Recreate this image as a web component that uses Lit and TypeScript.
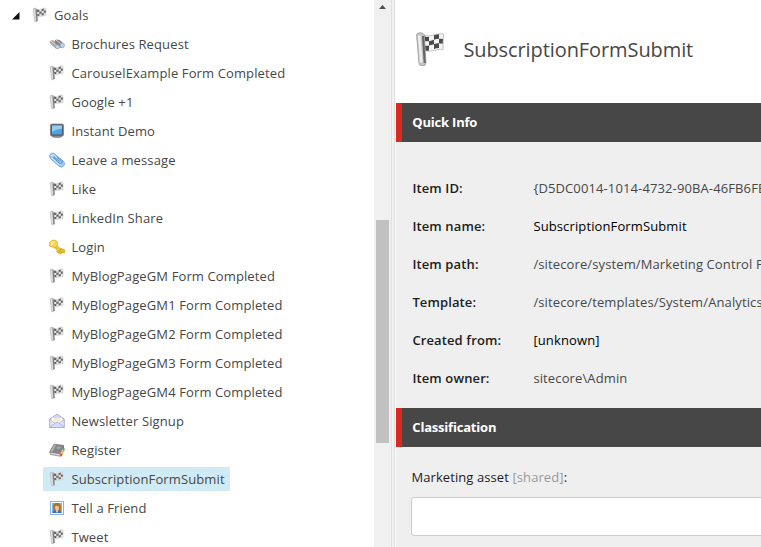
import { LitElement, html, css, svg } from "lit";
import { customElement, property } from "lit/decorators.js";

const largeFlag = svg`
  <path d="M9 2.5C15 6.5 20 .5 28.5 2L27.8 18C21 16 17 21 9.5 18.5Z" fill="#f3f3f3" stroke="#c4c4c4"/>
  <path d="M9 4q3 1.3 5 .8v4.4q-3 .4-5-.5zM19 3.2q3-1 5-1v4.6q-3 0-5 1zM14 9.2q3-.7 5-1.4v4.4l-5 1.4zM24 6.8q2-.3 4 .2l-.4 4.7q-2-.4-3.6-.1zM9 13.2q3 1 5 .4v5q-3 .3-5-.4zM19 12.2q3-1 5-.8V16q-3 .2-5 1z" fill="#4b4b4b"/>
  <path d="M1.6 3Q1.4 .8 5 .8T9.2 3L11 31Q11 33.8 7.5 33.8T4 31Z" fill="#c4c4c4" stroke="#a6a6a6"/>
  <path d="M4.2 3.5L6.2 30.5" stroke="#ededed" stroke-width="2.6" fill="none"/>
  <path d="M8 4L9.7 31" stroke="#666" stroke-width="2" fill="none"/>`;

const smallFlag = svg`
  <path d="M4.5 2Q7.5 3.4 10 1.7T14 1.5V9Q11.5 8.4 9.5 9.3T5 9.4Z" fill="#e4e4e4" stroke="#c9c9c9" stroke-width=".6"/>
  <path d="M5 2.6l2.3.3v2H5zM9.6 2.2l2.2-.7v2.1l-2.2.7zM7.3 4.9l2.3-.6v2.2l-2.3.6zM11.8 3.6l2-.1v2.2h-2zM5 7l2.3.1v2H5zM9.6 6.5l2.2-.6v2l-2.2.7z" fill="#666"/>
  <path d="M1.2 1.8Q2.8.3 4.5 1.8L5.7 13.8Q4.4 15.8 2.5 14.2Z" fill="#c4c4c4" stroke="#b4b4b4" stroke-width=".6"/>
  <path d="M2.3 2.2L3.4 13.8" stroke="#e2e2e2" stroke-width="1.1"/>
  <path d="M4.2 2.5L5 14" stroke="#7a7a7a" stroke-width="1.1"/>`;

const glyphs: Record<string, unknown> = {
  flag: smallFlag,
  binoculars: svg`
    <path d="M.5 6.5Q1 4 4 4L10 9 8 12Q5 12 .5 6.5Z" fill="#aaa9a7"/>
    <path d="M6 4Q9 2.5 12 5l3 4-3 3-6-5Z" fill="#85827f"/>
    <path d="M2 5l6 5M7 4l5 4" stroke="#d8d8d8"/>
    <ellipse cx="8.4" cy="10.7" rx="2.4" ry="1.9" fill="#badcf3" stroke="#85898c" stroke-width=".7"/>
    <ellipse cx="13.3" cy="9.3" rx="2.1" ry="2.5" fill="#b5d9f4" stroke="#8c969c" stroke-width=".7"/>`,
  monitor: svg`
    <path d="M5 12h6l2.5 1.8Q8 16.4 2.5 13.8Z" fill="#777"/>
    <rect x="1.4" y="1" width="13.2" height="12" rx="1.6" fill="#535b63" stroke="#7b8188" stroke-width=".7"/>
    <rect x="3" y="2.6" width="10" height="8.8" fill="#4ba2e4"/>
    <path d="M3 2.6h10v3.2Q7 6 3 9Z" fill="#93cdf5"/>
    <path d="M4 14.2h8" stroke="#b8b8b8" stroke-width=".8"/>`,
  clip: svg`
    <path d="M.9 2.8Q2.4.2 5 1.4L14.6 9.4Q16.4 11.6 14.7 13.8T10.4 14.5L1.5 6.7Q.2 4.5.9 2.8Z" fill="#a5cdf5" stroke="#6ea2da" stroke-width=".9"/>
    <path d="M4 5.3L10 11Q12 12.2 13 10.7T12.5 9L7.2 4.6Q5.8 4 5.2 5L10.5 9.5" fill="none" stroke="#5389c8"/>
    <path d="M2.4 4Q2.9 2.3 4.5 3L8 5.6M3 6L10 12.5" fill="none" stroke="#ddeeff" stroke-width=".9"/>`,
  key: svg`
    <path d="M6.5 5.7L13.5 11.2 12.4 14 10.8 12.8 9.8 14.3 7.7 12.6 8.4 11 5 8.3Z" fill="#efc431" stroke="#d2a01e" stroke-width=".7"/>
    <path d="M12 9.6l3.6 1.2-.1 3-2.6-.4-1.2 1.8-2-1.6Z" fill="#e8b823" stroke="#c99818" stroke-width=".6"/>
    <path d="M.7 3.6Q2.1.8 5.3 1.1T8.6 5.2 5 8.3.7 7 .7 3.6Z" fill="#fbd744" stroke="#d9ad24" stroke-width=".8"/>
    <path d="M2 3.8Q3.5 2 6 3" stroke="#fff0a0" fill="none"/><circle cx="2.9" cy="5.2" r=".9" fill="#fff"/>`,
  mail: svg`
    <path d="M.8 6L8 1l7.2 5v8.5H.8Z" fill="#d4d6f4" stroke="#a4a9dc" stroke-width=".9"/>
    <path d="M2.5 4.5h11V11h-11Z" fill="#fff8ea" stroke="#dccdb8" stroke-width=".6"/>
    <path d="M5 6h6M4.5 7.7h7" stroke="#e2d4b8" stroke-width=".7"/>
    <path d="M.8 6.5L6 10.3.8 14.5ZM15.2 6.5L10 10.3l5.2 4.2Z" fill="#e3e5fb" stroke="#a4a9dc" stroke-width=".6"/>
    <path d="M.8 14.5L6 10Q8 8.7 10 10l5.2 4.5Z" fill="#d8dcfa" stroke="#a0a5da" stroke-width=".7"/>`,
  book: svg`
    <path d="M5 2.2L14.8 3.4 11.2 11.8.7 10Z" fill="#858585" stroke="#707070" stroke-width=".7"/>
    <path d="M5.3 2.7L7 3 3.3 10.1 1.2 9.8Z" fill="#b2b2b2"/>
    <path d="M8.2 4.6l3.8.5-1 2-3.8-.6Z" fill="#a8a8a8"/>
    <path d="M.7 10l10.5 1.8v2.4L1.5 12.5Z" fill="#d6d6d6" stroke="#7c7c7c" stroke-width=".7"/>
    <path d="M14.8 3.4v3.1l-1 2.3V5.8Z" fill="#5c5c5c"/>
    <path d="M13.9 6l1.7.2v2.6l-1.7.1Z" fill="#51b346"/><path d="M12.7 8.8l2.2.1-.5 2.6-1.7.5Z" fill="#f2bd36"/><path d="M11.3 11.7l2.4-.3-.6 2.6-1.8.5Z" fill="#e14b32"/>`,
  person: svg`
    <rect x="1.5" y="1.5" width="13" height="13" fill="#f8fbff" stroke="#8fafdc"/>
    <rect x="3" y="3" width="10" height="10" fill="#82b1ee"/>
    <path d="M4.2 11V6Q4.5 3 8 3t3.8 3v5Z" fill="#b0711d"/>
    <path d="M3.5 13q.5-3 4.5-3t4.5 3Z" fill="#316fcb"/>
    <path d="M6 6.5Q8 5 10 7q.3 3.2-2 4-2.2-.8-2-4.5Z" fill="#f9c477"/>
    <path d="M6.5 10.5h3L8 13Z" fill="#f7d8a8"/>`,
};

@customElement("item-icon")
class ItemIcon extends LitElement {
  @property() name = "flag";
  static styles = css`
    :host { display: block; width: 16px; height: 16px; flex: none; }
    svg { display: block; width: 100%; height: 100%; overflow: visible; }
  `;
  render() {
    return this.name === "large-flag"
      ? html`<svg viewBox="0 0 32 35">${largeFlag}</svg>`
      : html`<svg viewBox="0 0 16 16">${glyphs[this.name]}</svg>`;
  }
}

const goals: [string, string][] = [
  ["binoculars", "Brochures Request"],
  ["flag", "CarouselExample Form Completed"],
  ["flag", "Google +1"],
  ["monitor", "Instant Demo"],
  ["clip", "Leave a message"],
  ["flag", "Like"],
  ["flag", "LinkedIn Share"],
  ["key", "Login"],
  ["flag", "MyBlogPageGM Form Completed"],
  ["flag", "MyBlogPageGM1 Form Completed"],
  ["flag", "MyBlogPageGM2 Form Completed"],
  ["flag", "MyBlogPageGM3 Form Completed"],
  ["flag", "MyBlogPageGM4 Form Completed"],
  ["mail", "Newsletter Signup"],
  ["book", "Register"],
  ["flag", "SubscriptionFormSubmit"],
  ["person", "Tell a Friend"],
  ["flag", "Tweet"],
];

const info: [string, string, boolean][] = [
  ["Item ID:", "{D5DC0014-1014-4732-90BA-46FB6FE", false],
  ["Item name:", "SubscriptionFormSubmit", true],
  ["Item path:", "/sitecore/system/Marketing Control P", false],
  ["Template:", "/sitecore/templates/System/Analytics", false],
  ["Created from:", "[unknown]", true],
  ["Item owner:", "sitecore\\Admin", false],
];

@customElement("app-root")
class AppRoot extends LitElement {
  static styles = css`
    :host {
      display: flex; width: 100%; height: 547px; overflow: hidden; background: #fff;
      font: 13px/24px "Open Sans", "Noto Sans", sans-serif; color: #474747; letter-spacing: .12px;
    }
    * { box-sizing: border-box; }
    .tree { width: 374px; flex: none; padding-top: 3px; overflow: hidden; }
    .node { display: flex; align-items: center; width: max-content; height: 24px; margin: 0 0 5px 43px; padding: 0 5px 0 6px; gap: 6.4px; white-space: nowrap; }
    .node.root { margin-left: 5px; gap: 0; }
    .node.root item-icon { margin: 0 6px 0 12px; }
    .node.selected { background: #d0ebf6; }
    .arrow { display: block; width: 9px; height: 9px; }
    .scroll { width: 17px; flex: none; background: #f0f0f0; display: flex; flex-direction: column; align-items: center; }
    .up { display: block; width: 7px; height: 4px; margin: 5px 0 211px; }
    .thumb { width: 13px; height: 223px; background: #c1c1c1; }
    .splitter { width: 5px; flex: none; background: #f2f2f2; border-left: 1px solid #e0e0e0; border-right: 1px solid #fff; box-shadow: inset -1px 0 #ddd; }
    .editor { flex: 1; min-width: 0; background: #efefef; overflow: hidden; }
    .title { height: 103px; background: #fff; display: flex; align-items: center; padding: 0 0 5px 19px; gap: 16.4px; }
    .title item-icon { width: 32px; height: 35px; }
    .title h1 { margin: 2px 0 0; font-size: 20px; line-height: 28px; font-weight: 400; letter-spacing: -.09px; }
    .bar { height: 39px; margin: 0; border-left: 6px solid #dc291e; background: #474747; color: #fff; padding-left: 10.3px; font-size: 13px; line-height: 39px; font-weight: 700; letter-spacing: -.2px; }
    .info { display: grid; grid-template-columns: 121px 1fr; grid-auto-rows: 38px; align-items: center; height: 266px; margin: 0; padding: 27px 0 0 16.4px; white-space: nowrap; }
    dt { color: #1d1d1d; font-weight: 600; }
    dd { margin: 0; }
    .dark { color: #000; }
    .field { padding: 18px 0 0 15px; }
    .label { color: #1d1d1d; display: block; height: 32px; line-height: 24px; padding-left: .4px; letter-spacing: .09px; }
    .muted { color: #999; }
    .box { width: calc(100% + 8px); height: 39px; background: #fff; border: 1px solid #ccc; border-radius: 3px; }
  `;
  render() {
    return html`
      <nav class="tree">
        <div class="node root">
          <svg class="arrow" viewBox="0 0 9 9"><path d="M8.5 1v7.5H1Z" fill="#111"/></svg>
          <item-icon></item-icon><span>Goals</span>
        </div>
        ${goals.map(([icon, label]) => html`
          <div class="node ${label === "SubscriptionFormSubmit" ? "selected" : ""}">
            <item-icon name=${icon}></item-icon><span>${label}</span>
          </div>`)}
      </nav>
      <div class="scroll">
        <svg class="up" viewBox="0 0 7 4"><path d="M3.5 0L7 4H0Z" fill="#505050"/></svg>
        <div class="thumb"></div>
      </div>
      <div class="splitter"></div>
      <main class="editor">
        <header class="title"><item-icon name="large-flag"></item-icon><h1>SubscriptionFormSubmit</h1></header>
        <h2 class="bar">Quick Info</h2>
        <dl class="info">
          ${info.map(([k, v, dark]) => html`<dt>${k}</dt><dd class=${dark ? "dark" : ""}>${v}</dd>`)}
        </dl>
        <h2 class="bar">Classification</h2>
        <div class="field">
          <span class="label">Marketing asset <span class="muted">[shared]</span>:</span>
          <div class="box"></div>
        </div>
      </main>`;
  }
}
